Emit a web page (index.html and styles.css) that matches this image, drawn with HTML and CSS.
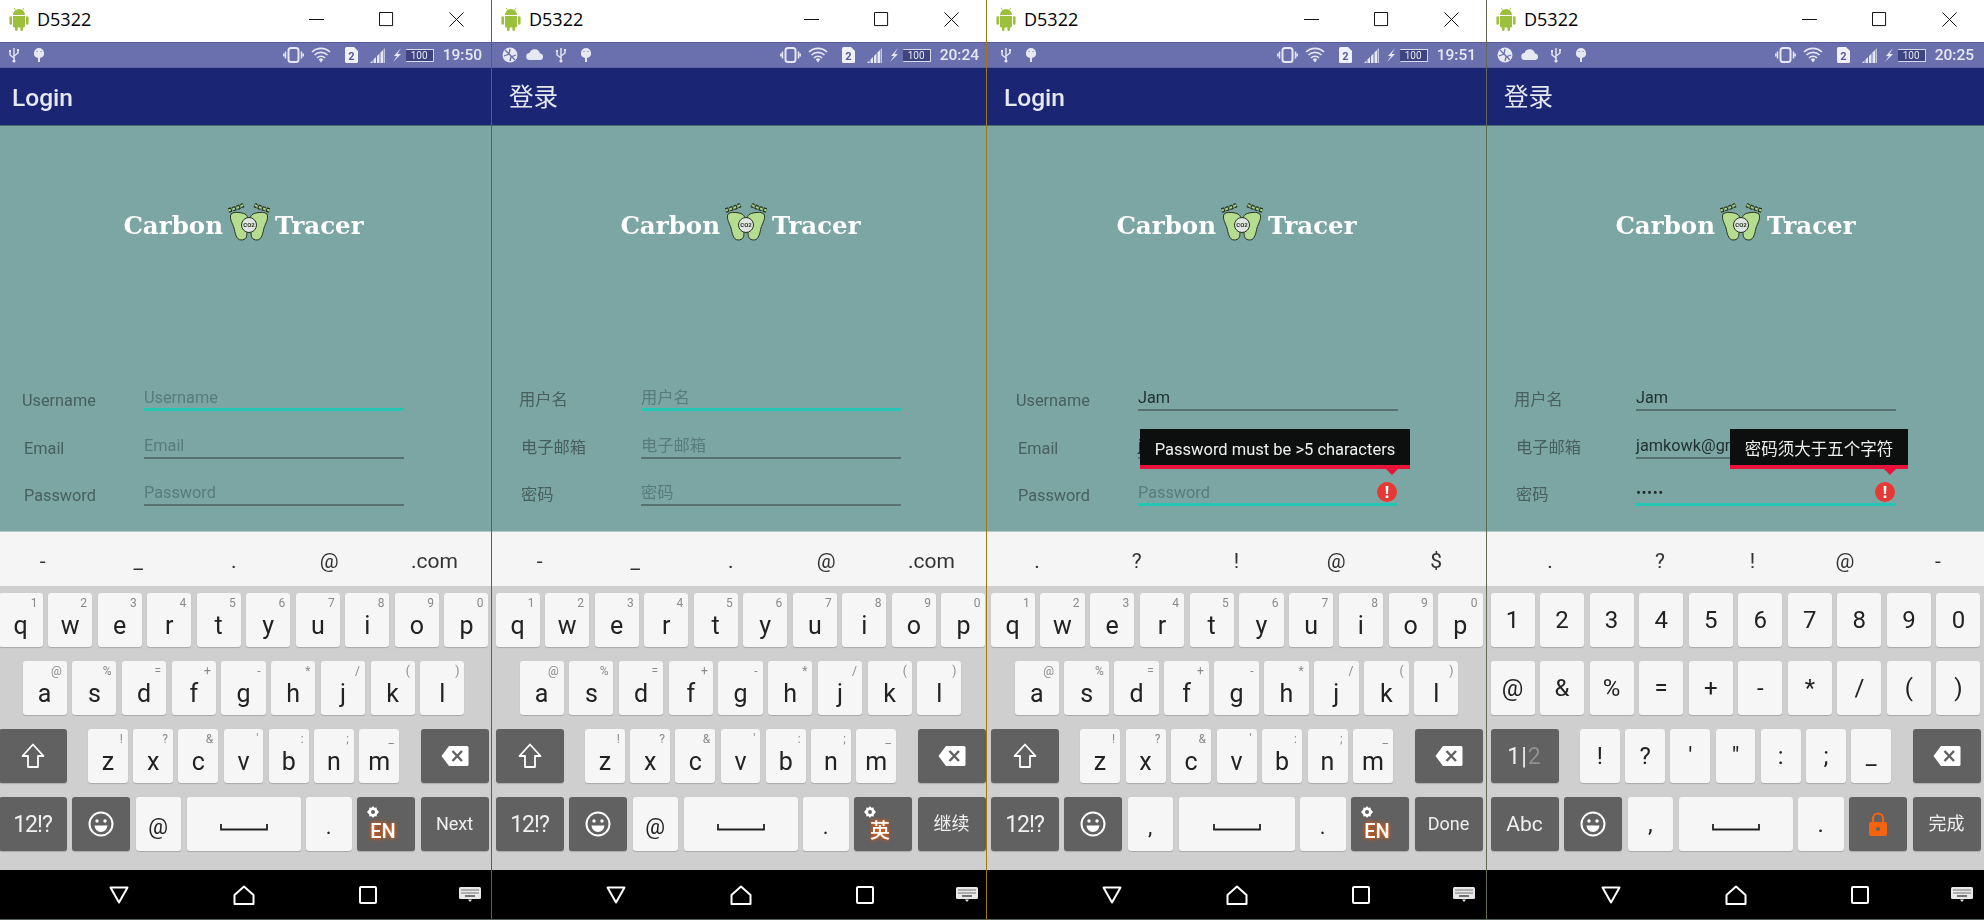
FILE: index.html
```html
<!DOCTYPE html>
<html lang="en">
<head>
<meta charset="UTF-8" />
<title>Carbon Tracer login</title>
<link rel="stylesheet" href="styles.css">
</head>
<body>

<svg class="defs" aria-hidden="true">
  <symbol id="i-android" viewBox="0 0 20 24">
    <path fill="#9bc13c" d="M4 8a6 6 0 0 1 12 0zM4 9h12v10a1.500 1.500 0 0 1-1.500 1.500H5.500A1.500 1.500 0 0 1 4 19zM.4 10.500a1.300 1.300 0 0 1 2.600 0v6a1.300 1.300 0 0 1-2.600 0zM17 10.500a1.300 1.300 0 0 1 2.600 0v6a1.300 1.300 0 0 1-2.600 0zM6 20h2.600v2.700a1.300 1.300 0 0 1-2.600 0zM11.400 20H14v2.700a1.300 1.300 0 0 1-2.600 0z"/>
    <path stroke="#9bc13c" stroke-width=".8" d="M6.500 3.500 5.200.8M13.500 3.500 14.800.8"/>
  </symbol>
  <symbol id="i-min" viewBox="0 0 16 16"><path stroke="#000" d="M0 8h16"/></symbol>
  <symbol id="i-max" viewBox="0 0 16 16"><path fill="none" stroke="#000" d="M.5.500h14v14H.5z"/></symbol>
  <symbol id="i-close" viewBox="0 0 16 16"><path stroke="#000" d="M.5.500l15 15M15.500.500l-15 15"/></symbol>
  <symbol id="i-saver" viewBox="0 0 16 16">
    <circle cx="8" cy="8" r="7.500" fill="#e6e8f2"/>
    <path fill="none" stroke="#6a70ae" stroke-width="1.300" d="M3 3l10 10M2 9l5-2 1-5M8 14l1-4 5-2"/>
  </symbol>
  <symbol id="i-cloud" viewBox="0 0 18 12"><path fill="#e6e8f2" d="M4 11a3.500 3.500 0 0 1-.5-7A5.500 5.500 0 0 1 14 4.500 3.300 3.300 0 0 1 14.500 11z"/></symbol>
  <symbol id="i-usb" viewBox="0 0 12 16">
    <path fill="none" stroke="#e6e8f2" stroke-width="1.400" d="M6 1v14M2 5v3l4 3M10 4v2l-4 3"/>
    <circle cx="6" cy="14" r="1.600" fill="#e6e8f2"/><rect x="1" y="3" width="2" height="2" fill="#e6e8f2"/><rect x="9" y="2" width="2" height="2" fill="#e6e8f2"/>
  </symbol>
  <symbol id="i-debug" viewBox="0 0 12 16">
    <path fill="#e6e8f2" d="M1 6a5 5 0 0 1 10 0v2a5 5 0 0 1-4 3v4H5v-4a5 5 0 0 1-4-3z"/>
    <path fill="#6a70ae" d="M3.500 4h1v1h-1zM7.500 4h1v1h-1z"/>
  </symbol>
  <symbol id="i-vibrate" viewBox="0 0 21 16">
    <rect x="5.500" y="1" width="10" height="14" rx="2.500" fill="none" stroke="#e6e8f2" stroke-width="2"/>
    <path fill="none" stroke="#e6e8f2" stroke-width="1.500" d="M2.500 4.500v7M18.500 4.500v7M.8 6.500v3M20.200 6.500v3"/>
  </symbol>
  <symbol id="i-wifi" viewBox="0 0 20 16">
    <path fill="none" stroke="#e6e8f2" stroke-width="1.700" d="M1 5a13 13 0 0 1 18 0M3.500 8a9.500 9.500 0 0 1 13 0M6 11a5.500 5.500 0 0 1 8 0"/>
    <path fill="#e6e8f2" d="M7.800 12.500a3 3 0 0 1 4.400 0L10 15.500z"/>
  </symbol>
  <symbol id="i-sim" viewBox="0 0 13 16">
    <path fill="#f1f2f8" d="M1.500 0H9l4 4v10.500a1.500 1.500 0 0 1-1.500 1.500h-10A1.500 1.500 0 0 1 0 14.500v-13A1.500 1.500 0 0 1 1.500 0z"/>
    <text x="6.500" y="13" text-anchor="middle" class="sim-num">2</text>
  </symbol>
  <symbol id="i-signal" viewBox="0 0 15 15">
    <path fill="#e6e8f2" d="M0 15l2.500-2.500V15zM3.500 15v-3.500L6 9v6zM7 15V8l2.500-2.500V15z"/><path fill="#e6e8f2" d="M10.500 15V4.500L13 2v13z"/>
    <path fill="#e6e8f2" opacity=".7" d="M13.500 15V1.500L15 0v15z"/>
  </symbol>
  <symbol id="i-bolt" viewBox="0 0 8 14"><path fill="#e6e8f2" d="M8 0 1 8h3l-4 6 8-8H4.500z"/></symbol>
  <symbol id="i-shift" viewBox="0 0 24 26"><path fill="none" stroke="#fff" stroke-width="1.800" stroke-linejoin="round" d="M12 1.500 1.500 13H7v11h10V13h5.500z"/></symbol>
  <symbol id="i-back" viewBox="0 0 28 22">
    <path fill="#fff" d="M8 1h18a1.500 1.500 0 0 1 1.500 1.500v17A1.500 1.500 0 0 1 26 21H8L.5 11z"/>
    <path stroke="#616161" stroke-width="2.400" d="M11.500 6l9.500 10M21 6l-9.500 10"/>
  </symbol>
  <symbol id="i-smile" viewBox="0 0 26 26">
    <circle cx="13" cy="13" r="11.500" fill="none" stroke="#fff" stroke-width="2"/>
    <circle cx="9" cy="10" r="1.700" fill="#fff"/><circle cx="17" cy="10" r="1.700" fill="#fff"/>
    <path fill="#fff" d="M6.500 14.500h13a6.500 6.500 0 0 1-13 0z"/>
  </symbol>
  <symbol id="i-space" viewBox="0 0 48 7"><path fill="none" stroke="#222" stroke-width="1.800" d="M1 0v5.500h46V0"/></symbol>
  <symbol id="i-gear" viewBox="0 0 12 12">
    <path fill="#fff" d="M6 0l1.300 1.800 2.300-.4.200 2.200L12 6l-2.200 2.400-.2 2.200-2.300-.4L6 12l-1.300-1.800-2.300.4-.2-2.200L0 6l2.200-2.400.2-2.200 2.300.4z"/>
    <circle cx="6" cy="6" r="2" fill="#616161"/>
  </symbol>
  <symbol id="i-lock" viewBox="0 0 18 24">
    <path fill="none" stroke="#f4640f" stroke-width="2.200" d="M4 11V6.500a5 5 0 0 1 10 0V11"/>
    <path fill="#f4640f" d="M2 10h14a2 2 0 0 1 2 2v10a2 2 0 0 1-2 2H2a2 2 0 0 1-2-2V12a2 2 0 0 1 2-2z"/>
    <circle cx="9" cy="17" r="2" fill="#616161"/>
  </symbol>
  <symbol id="i-nav-back" viewBox="0 0 20 18"><path fill="none" stroke="#fff" stroke-width="2" stroke-linejoin="round" d="M1.500 1.500h17L10 16.500z"/></symbol>
  <symbol id="i-nav-home" viewBox="0 0 22 20"><path fill="none" stroke="#fff" stroke-width="2" stroke-linejoin="round" d="M11 1.500 1.500 10v9h19v-9z"/></symbol>
  <symbol id="i-nav-recent" viewBox="0 0 18 18"><rect x="1" y="1" width="16" height="16" rx="1" fill="none" stroke="#fff" stroke-width="2"/></symbol>
  <symbol id="i-nav-kbd" viewBox="0 0 22 15">
    <rect x="0" y="0" width="22" height="12" rx="1.500" fill="#e8e8e8"/>
    <path stroke="#000" stroke-dasharray="1 1" d="M2.500 3h17M2.500 6h17"/><path stroke="#000" d="M6 9h10"/>
    <path fill="#e8e8e8" d="M9 12.500h4L11 15z"/>
  </symbol>
  <symbol id="i-logo" viewBox="0 0 44 38">
    <path fill="#b5dd8f" stroke="#26331f" stroke-width="1" d="M4 11c-2 5 2 10 3 14 1 4 2 12 7 12s6-3 6-8 1-9 1-12c0-3-1-6-6-7-4-1-9-1-11 1z"/>
    <path fill="#b5dd8f" stroke="#26331f" stroke-width="1" d="M40 11c2 5-2 10-3 14-1 4-2 12-7 12s-6-3-6-8-1-9-1-12c0-3 1-6 6-7 4-1 9-1 11 1z"/>
    <path fill="none" stroke="#26331f" stroke-width="4.500" stroke-dasharray="3.400 1" d="M1.500 7.500c5-1.500 10-3 15-5.500M42.500 7.500c-5-1.500-10-3-15-5.500"/>
    <path fill="none" stroke="#a9d584" stroke-width="2" stroke-dasharray="2.400 2" d="M1.500 7.500c5-1.500 10-3 15-5.500M42.500 7.500c-5-1.500-10-3-15-5.500"/>
    <circle cx="22" cy="22" r="7.500" fill="#dfe5e2" stroke="#26331f"/>
    <text x="22" y="24" text-anchor="middle" class="logo-co2">CO2</text>
  </symbol>
  <symbol id="i-error" viewBox="0 0 20 20">
    <circle cx="10" cy="10" r="10" fill="#e53935"/>
    <path fill="#fff" d="M8.600 4h2.800l-.4 8H9zM8.700 13.500h2.600V16H8.700z"/>
  </symbol>
</svg>

<main class="screens">

  <section class="window window-one">
    <header class="titlebar">
      <svg class="app-icon"><use href="#i-android"/></svg><span class="app-name">D5322</span>
      <div class="controls"><span class="ctrl"><svg><use href="#i-min"/></svg></span><span class="ctrl"><svg><use href="#i-max"/></svg></span><span class="ctrl"><svg><use href="#i-close"/></svg></span></div>
    </header>
    <div class="phone">
      <div class="status">
        <svg class="si si-usb"><use href="#i-usb"/></svg><svg class="si si-debug"><use href="#i-debug"/></svg>
        <div class="status-right">
          <svg class="si si-vibrate"><use href="#i-vibrate"/></svg><svg class="si si-wifi"><use href="#i-wifi"/></svg><svg class="si si-sim"><use href="#i-sim"/></svg><svg class="si si-signal"><use href="#i-signal"/></svg><svg class="si si-bolt"><use href="#i-bolt"/></svg><span class="battery">100</span><span class="clock">19:50</span>
        </div>
      </div>
      <div class="appbar">Login</div>
      <div class="content">
        <div class="logo"><span>Carbon</span><svg class="logo-feet"><use href="#i-logo"/></svg><span>Tracer</span></div>
        <form class="form">
          <div class="row row-first"><label>Username</label><div class="field is-focus"><span class="hint-text">Username</span></div></div>
          <div class="row"><label>Email</label><div class="field"><span class="hint-text">Email</span></div></div>
          <div class="row"><label>Password</label><div class="field"><span class="hint-text">Password</span></div></div>
        </form>
      </div>
      <div class="suggest suggest-com"><span>-</span><span>_</span><span>.</span><span>@</span><span>.com</span></div>
      <div class="keyboard">
        <div class="keyrow"><b class="key">q<i>1</i></b><b class="key">w<i>2</i></b><b class="key">e<i>3</i></b><b class="key">r<i>4</i></b><b class="key">t<i>5</i></b><b class="key">y<i>6</i></b><b class="key">u<i>7</i></b><b class="key">i<i>8</i></b><b class="key">o<i>9</i></b><b class="key">p<i>0</i></b></div>
        <div class="keyrow keyrow-nine"><b class="key">a<i>@</i></b><b class="key">s<i>%</i></b><b class="key">d<i>=</i></b><b class="key">f<i>+</i></b><b class="key">g<i>-</i></b><b class="key">h<i>*</i></b><b class="key">j<i>/</i></b><b class="key">k<i>(</i></b><b class="key">l<i>)</i></b></div>
        <div class="keyrow"><b class="key key-dark key-side"><svg class="k-shift"><use href="#i-shift"/></svg></b><div class="keymid"><b class="key">z<i>!</i></b><b class="key">x<i>?</i></b><b class="key">c<i>&amp;</i></b><b class="key">v<i>'</i></b><b class="key">b<i>:</i></b><b class="key">n<i>;</i></b><b class="key">m<i>_</i></b></div><b class="key key-dark key-side"><svg class="k-back"><use href="#i-back"/></svg></b></div>
        <div class="keyrow"><b class="key key-dark key-side k-sym">12!?</b><b class="key key-dark key-mid"><svg class="k-smile"><use href="#i-smile"/></svg></b><b class="key key-small k-low">@</b><b class="key key-space"><svg class="k-space"><use href="#i-space"/></svg></b><b class="key key-small k-low">.</b><b class="key key-dark key-mid k-lang"><svg class="k-gear"><use href="#i-gear"/></svg><em>EN</em></b><b class="key key-dark key-side k-act">Next</b></div>
      </div>
      <nav class="navbar"><svg class="nav-back"><use href="#i-nav-back"/></svg><svg class="nav-home"><use href="#i-nav-home"/></svg><svg class="nav-recent"><use href="#i-nav-recent"/></svg><svg class="nav-kbd"><use href="#i-nav-kbd"/></svg></nav>
    </div>
  </section>

  <section class="window window-two">
    <header class="titlebar">
      <svg class="app-icon"><use href="#i-android"/></svg><span class="app-name">D5322</span>
      <div class="controls"><span class="ctrl"><svg><use href="#i-min"/></svg></span><span class="ctrl"><svg><use href="#i-max"/></svg></span><span class="ctrl"><svg><use href="#i-close"/></svg></span></div>
    </header>
    <div class="phone">
      <div class="status">
        <svg class="si si-saver"><use href="#i-saver"/></svg><svg class="si si-cloud"><use href="#i-cloud"/></svg><svg class="si si-usb si-usb-next"><use href="#i-usb"/></svg><svg class="si si-debug"><use href="#i-debug"/></svg>
        <div class="status-right">
          <svg class="si si-vibrate"><use href="#i-vibrate"/></svg><svg class="si si-wifi"><use href="#i-wifi"/></svg><svg class="si si-sim"><use href="#i-sim"/></svg><svg class="si si-signal"><use href="#i-signal"/></svg><svg class="si si-bolt"><use href="#i-bolt"/></svg><span class="battery">100</span><span class="clock">20:24</span>
        </div>
      </div>
      <div class="appbar appbar-zh">登录</div>
      <div class="content">
        <div class="logo"><span>Carbon</span><svg class="logo-feet"><use href="#i-logo"/></svg><span>Tracer</span></div>
        <form class="form">
          <div class="row row-first"><label>用户名</label><div class="field is-focus"><span class="hint-text">用户名</span></div></div>
          <div class="row"><label>电子邮箱</label><div class="field"><span class="hint-text">电子邮箱</span></div></div>
          <div class="row"><label>密码</label><div class="field"><span class="hint-text">密码</span></div></div>
        </form>
      </div>
      <div class="suggest suggest-com"><span>-</span><span>_</span><span>.</span><span>@</span><span>.com</span></div>
      <div class="keyboard">
        <div class="keyrow"><b class="key">q<i>1</i></b><b class="key">w<i>2</i></b><b class="key">e<i>3</i></b><b class="key">r<i>4</i></b><b class="key">t<i>5</i></b><b class="key">y<i>6</i></b><b class="key">u<i>7</i></b><b class="key">i<i>8</i></b><b class="key">o<i>9</i></b><b class="key">p<i>0</i></b></div>
        <div class="keyrow keyrow-nine"><b class="key">a<i>@</i></b><b class="key">s<i>%</i></b><b class="key">d<i>=</i></b><b class="key">f<i>+</i></b><b class="key">g<i>-</i></b><b class="key">h<i>*</i></b><b class="key">j<i>/</i></b><b class="key">k<i>(</i></b><b class="key">l<i>)</i></b></div>
        <div class="keyrow"><b class="key key-dark key-side"><svg class="k-shift"><use href="#i-shift"/></svg></b><div class="keymid"><b class="key">z<i>!</i></b><b class="key">x<i>?</i></b><b class="key">c<i>&amp;</i></b><b class="key">v<i>'</i></b><b class="key">b<i>:</i></b><b class="key">n<i>;</i></b><b class="key">m<i>_</i></b></div><b class="key key-dark key-side"><svg class="k-back"><use href="#i-back"/></svg></b></div>
        <div class="keyrow"><b class="key key-dark key-side k-sym">12!?</b><b class="key key-dark key-mid"><svg class="k-smile"><use href="#i-smile"/></svg></b><b class="key key-small k-low">@</b><b class="key key-space"><svg class="k-space"><use href="#i-space"/></svg></b><b class="key key-small k-low">.</b><b class="key key-dark key-mid k-lang"><svg class="k-gear"><use href="#i-gear"/></svg><em>英</em></b><b class="key key-dark key-side k-act">继续</b></div>
      </div>
      <nav class="navbar"><svg class="nav-back"><use href="#i-nav-back"/></svg><svg class="nav-home"><use href="#i-nav-home"/></svg><svg class="nav-recent"><use href="#i-nav-recent"/></svg><svg class="nav-kbd"><use href="#i-nav-kbd"/></svg></nav>
    </div>
  </section>

  <section class="window window-three">
    <header class="titlebar">
      <svg class="app-icon"><use href="#i-android"/></svg><span class="app-name">D5322</span>
      <div class="controls"><span class="ctrl"><svg><use href="#i-min"/></svg></span><span class="ctrl"><svg><use href="#i-max"/></svg></span><span class="ctrl"><svg><use href="#i-close"/></svg></span></div>
    </header>
    <div class="phone">
      <div class="status">
        <svg class="si si-usb"><use href="#i-usb"/></svg><svg class="si si-debug"><use href="#i-debug"/></svg>
        <div class="status-right">
          <svg class="si si-vibrate"><use href="#i-vibrate"/></svg><svg class="si si-wifi"><use href="#i-wifi"/></svg><svg class="si si-sim"><use href="#i-sim"/></svg><svg class="si si-signal"><use href="#i-signal"/></svg><svg class="si si-bolt"><use href="#i-bolt"/></svg><span class="battery">100</span><span class="clock">19:51</span>
        </div>
      </div>
      <div class="appbar">Login</div>
      <div class="content">
        <div class="logo"><span>Carbon</span><svg class="logo-feet"><use href="#i-logo"/></svg><span>Tracer</span></div>
        <form class="form">
          <div class="row row-first"><label>Username</label><div class="field"><span class="value">Jam</span></div></div>
          <div class="row"><label>Email</label><div class="field"><span class="value">jamkowk@gmail.com</span></div></div>
          <div class="row"><label>Password</label><div class="field is-focus has-error"><span class="hint-text">Password</span>
            <svg class="err-icon"><use href="#i-error"/></svg>
            <div class="tip tip-en">Password must be &gt;5 characters</div>
          </div></div>
        </form>
      </div>
      <div class="suggest"><span>.</span><span>?</span><span>!</span><span>@</span><span>$</span></div>
      <div class="keyboard">
        <div class="keyrow"><b class="key">q<i>1</i></b><b class="key">w<i>2</i></b><b class="key">e<i>3</i></b><b class="key">r<i>4</i></b><b class="key">t<i>5</i></b><b class="key">y<i>6</i></b><b class="key">u<i>7</i></b><b class="key">i<i>8</i></b><b class="key">o<i>9</i></b><b class="key">p<i>0</i></b></div>
        <div class="keyrow keyrow-nine"><b class="key">a<i>@</i></b><b class="key">s<i>%</i></b><b class="key">d<i>=</i></b><b class="key">f<i>+</i></b><b class="key">g<i>-</i></b><b class="key">h<i>*</i></b><b class="key">j<i>/</i></b><b class="key">k<i>(</i></b><b class="key">l<i>)</i></b></div>
        <div class="keyrow"><b class="key key-dark key-side"><svg class="k-shift"><use href="#i-shift"/></svg></b><div class="keymid"><b class="key">z<i>!</i></b><b class="key">x<i>?</i></b><b class="key">c<i>&amp;</i></b><b class="key">v<i>'</i></b><b class="key">b<i>:</i></b><b class="key">n<i>;</i></b><b class="key">m<i>_</i></b></div><b class="key key-dark key-side"><svg class="k-back"><use href="#i-back"/></svg></b></div>
        <div class="keyrow"><b class="key key-dark key-side k-sym">12!?</b><b class="key key-dark key-mid"><svg class="k-smile"><use href="#i-smile"/></svg></b><b class="key key-small k-low">,</b><b class="key key-space"><svg class="k-space"><use href="#i-space"/></svg></b><b class="key key-small k-low">.</b><b class="key key-dark key-mid k-lang"><svg class="k-gear"><use href="#i-gear"/></svg><em>EN</em></b><b class="key key-dark key-side k-act">Done</b></div>
      </div>
      <nav class="navbar"><svg class="nav-back"><use href="#i-nav-back"/></svg><svg class="nav-home"><use href="#i-nav-home"/></svg><svg class="nav-recent"><use href="#i-nav-recent"/></svg><svg class="nav-kbd"><use href="#i-nav-kbd"/></svg></nav>
    </div>
  </section>

  <section class="window window-four">
    <header class="titlebar">
      <svg class="app-icon"><use href="#i-android"/></svg><span class="app-name">D5322</span>
      <div class="controls"><span class="ctrl"><svg><use href="#i-min"/></svg></span><span class="ctrl"><svg><use href="#i-max"/></svg></span><span class="ctrl"><svg><use href="#i-close"/></svg></span></div>
    </header>
    <div class="phone">
      <div class="status">
        <svg class="si si-saver"><use href="#i-saver"/></svg><svg class="si si-cloud"><use href="#i-cloud"/></svg><svg class="si si-usb si-usb-next"><use href="#i-usb"/></svg><svg class="si si-debug"><use href="#i-debug"/></svg>
        <div class="status-right">
          <svg class="si si-vibrate"><use href="#i-vibrate"/></svg><svg class="si si-wifi"><use href="#i-wifi"/></svg><svg class="si si-sim"><use href="#i-sim"/></svg><svg class="si si-signal"><use href="#i-signal"/></svg><svg class="si si-bolt"><use href="#i-bolt"/></svg><span class="battery">100</span><span class="clock">20:25</span>
        </div>
      </div>
      <div class="appbar appbar-zh">登录</div>
      <div class="content">
        <div class="logo"><span>Carbon</span><svg class="logo-feet"><use href="#i-logo"/></svg><span>Tracer</span></div>
        <form class="form">
          <div class="row row-first"><label>用户名</label><div class="field"><span class="value">Jam</span></div></div>
          <div class="row"><label>电子邮箱</label><div class="field"><span class="value">jamkowk@gmail.com</span></div></div>
          <div class="row"><label>密码</label><div class="field is-focus has-error"><span class="value value-dots">•••••</span>
            <svg class="err-icon"><use href="#i-error"/></svg>
            <div class="tip tip-zh">密码须大于五个字符</div>
          </div></div>
        </form>
      </div>
      <div class="suggest suggest-sym"><span>.</span><span>?</span><span>!</span><span>@</span><span>-</span></div>
      <div class="keyboard keyboard-sym">
        <div class="keyrow"><b class="key">1</b><b class="key">2</b><b class="key">3</b><b class="key">4</b><b class="key">5</b><b class="key">6</b><b class="key">7</b><b class="key">8</b><b class="key">9</b><b class="key">0</b></div>
        <div class="keyrow"><b class="key">@</b><b class="key">&amp;</b><b class="key">%</b><b class="key">=</b><b class="key">+</b><b class="key">-</b><b class="key">*</b><b class="key">/</b><b class="key">(</b><b class="key">)</b></div>
        <div class="keyrow"><b class="key key-dark key-side k-sym k-page">1|<u>2</u></b><div class="keymid"><b class="key">!</b><b class="key">?</b><b class="key">'</b><b class="key">"</b><b class="key">:</b><b class="key">;</b><b class="key">_</b></div><b class="key key-dark key-side"><svg class="k-back"><use href="#i-back"/></svg></b></div>
        <div class="keyrow"><b class="key key-dark key-side k-act k-abc">Abc</b><b class="key key-dark key-mid"><svg class="k-smile"><use href="#i-smile"/></svg></b><b class="key key-small k-low">,</b><b class="key key-space"><svg class="k-space"><use href="#i-space"/></svg></b><b class="key key-small k-low">.</b><b class="key key-dark key-mid"><svg class="k-lock"><use href="#i-lock"/></svg></b><b class="key key-dark key-side k-act">完成</b></div>
      </div>
      <nav class="navbar"><svg class="nav-back"><use href="#i-nav-back"/></svg><svg class="nav-home"><use href="#i-nav-home"/></svg><svg class="nav-recent"><use href="#i-nav-recent"/></svg><svg class="nav-kbd"><use href="#i-nav-kbd"/></svg></nav>
    </div>
  </section>

</main>

</body>
</html>
```

FILE: styles.css
```css
* { box-sizing: border-box; }
html, body { margin: 0; padding: 0; height: 100%; overflow: hidden; background: #fff; }
body { font-family: Roboto, "Noto Sans CJK SC", sans-serif; }
.defs { display: none; }
svg { display: block; }

.screens { display: grid; grid-template-columns: 492px 495px 500px 497px; height: 920px; }
.window { display: flex; flex-direction: column; overflow: hidden; border-right: 1px solid #5f5f50; border-bottom: 1px solid #55605a; }
.window-two { border-right-color: #a07810; }
.window-three { border-right-color: #5f6a50; }
.window-four { border-right: 0; }

/* windows title bar */
.titlebar { display: flex; align-items: center; height: 42px; flex: none; padding-left: 9px; background: #fff; }
.app-icon { width: 20px; height: 24px; margin-top: -4px; }
.app-name { margin-left: 8px; margin-top: -4px; font: 18px "Open Sans", sans-serif; color: #000; }
.controls { display: flex; margin-left: auto; margin-top: -4px; }
.ctrl { display: flex; justify-content: center; width: 70px; }
.ctrl svg { width: 15px; height: 15px; }

/* phone */
.phone { display: flex; flex-direction: column; flex: 1; width: 497px; filter: blur(.35px); }
.window-one .phone { margin-left: -5px; }
.window-three .phone { width: 499px; }

.status { display: flex; align-items: center; height: 26px; flex: none; padding: 0 10px; background: #6a70ae; border-top: 1px solid #555b98; border-bottom: 1px solid #5b62a3; }
.si { flex: none; }
.si-usb { width: 12px; height: 16px; margin-left: 3px; }
.si-debug { width: 12px; height: 16px; margin-left: 13px; }
.si-saver { width: 16px; height: 16px; }
.si-cloud { width: 18px; height: 12px; margin-left: 8px; }
.si-usb-next { margin-left: 11px; }
.status-right { display: flex; align-items: center; margin-left: auto; }
.si-vibrate { width: 21px; height: 16px; }
.si-wifi { width: 20px; height: 16px; margin-left: 7px; }
.si-sim { width: 13px; height: 16px; margin-left: 14px; }
.sim-num { font: bold 11px Roboto, sans-serif; fill: #555b98; }
.si-signal { width: 15px; height: 15px; margin-left: 12px; }
.si-bolt { width: 8px; height: 14px; margin-left: 8px; }
.battery { width: 28px; height: 13px; margin-left: 5px; background: #3d4480; border: 1px solid #d8daea; border-left: 0; border-radius: 1px; font-size: 10px; line-height: 11px; text-align: center; color: #e6e8f2; }
.clock { margin-left: 9px; font-size: 15.500px; font-weight: 500; color: #e6e8f2; }

.appbar { display: flex; align-items: center; height: 58px; flex: none; padding: 1px 0 0 17px; background: #1a2674; border-bottom: 1px solid #4a6a72; font-size: 24.500px; font-weight: 500; color: #e6e8f2; }
.appbar-zh { padding-top: 0; padding-bottom: 3px; font-weight: 400; }

.content { display: flex; flex-direction: column; height: 405px; flex: none; background: #7ca6a3; }
.logo { display: flex; justify-content: center; align-items: center; gap: 4px; margin-top: 76px; height: 40px; font: bold 24.500px "DejaVu Serif", serif; color: #fff; }
.logo span { margin-top: 6px; }
.logo-feet { width: 44px; height: 38px; }
.logo-co2 { font: bold 6px Roboto, sans-serif; fill: #26331f; }

.form { margin-top: auto; padding-bottom: 25px; }
.window-three .form { padding-left: 2px; }
.row { display: grid; grid-template-columns: 149px 260px; height: 47.500px; }
.row label { align-self: end; padding-left: 29px; margin-bottom: 1px; font-size: 16.300px; color: #47605f; }
.row-first label { padding-left: 27px; }
.field { position: relative; display: flex; align-items: flex-end; padding-bottom: 1px; border-bottom: 2px solid #587272; font-size: 16.300px; line-height: 20px; }
.field.is-focus { border-bottom: 3px solid #26c6b4; padding-bottom: 0; }
.hint-text { color: #587c7c; }
.value { color: #1f2f2f; }
.value-dots { font-size: 15px; letter-spacing: .5px; }
.err-icon { position: absolute; right: 1px; bottom: 1px; width: 20px; height: 20px; }
.tip { position: absolute; right: -12px; bottom: 34px; height: 40px; padding-top: 10px; background: #0c0f0e; border-bottom: 4px solid #e8133a; font-size: 16.500px; line-height: 22px; color: #eef0f0; text-align: center; white-space: nowrap; }
.tip::after { content: ""; position: absolute; right: 12px; bottom: -10px; border: 6px solid transparent; border-bottom: 0; border-top-color: #e8133a; }
.tip-en { width: 270px; }
.tip-zh { width: 178px; }

.suggest { display: grid; grid-template-columns: repeat(5, 1fr); align-items: center; height: 55px; flex: none; padding-top: 4px; background: #f5f5f5; border-top: 1px solid #b5cac8; font-size: 21px; color: #333; text-align: center; }
.suggest-com { grid-template-columns: repeat(4, 95.400fr) 115fr; }
.suggest-sym { grid-template-columns: 126px 94px 91px 94px 1fr; }

.keyboard { display: flex; flex-direction: column; gap: 14px; height: 284px; flex: none; padding: 7px 3.500px 0; background: #cfcfcf; }
.keyrow { display: flex; gap: 5.500px; height: 54px; }
.keyrow-nine { padding: 0 24px; }
.key { position: relative; display: flex; flex: 1; align-items: center; justify-content: center; padding-top: 11px; background: #f6f6f6; border-radius: 3px; box-shadow: 0 1px 1px #a9a9a9; font-size: 25px; font-weight: 400; line-height: 1; color: #222; }
.key i { position: absolute; top: 3px; right: 5px; font-size: 12px; font-style: normal; line-height: 14px; color: #8a8a8a; }
.keymid { display: flex; flex: 1; gap: 5.500px; margin: 0 16px; }
.key-dark { background: #616161; padding-top: 0; color: #f0f0f0; }
.key-side { flex: none; width: 68px; }
.key-mid { flex: none; width: 58px; }
.key-small { flex: none; width: 45.500px; }
.key-space { padding-top: 0; }
.k-low { padding-top: 5px; font-size: 22px; }
.k-sym { font-size: 23px; letter-spacing: -1px; }
.k-act { font-size: 18px; }
.k-abc { font-size: 21px; }
.k-page { letter-spacing: 1px; }
.k-page u { text-decoration: none; color: #8f8f8f; }
.k-shift { width: 24px; height: 26px; }
.k-back { width: 28px; height: 22px; }
.k-smile { width: 26px; height: 26px; }
.k-space { width: 48px; height: 7px; margin-top: 7px; }
.k-lang em { margin: 14px 0 0 -6px; font-size: 20px; font-style: normal; font-weight: 500; color: #fff; text-shadow: 0 0 5px #e8590c, 0 0 3px #e8590c; }
.k-gear { position: absolute; top: 9px; left: 10px; width: 12px; height: 12px; }
.k-lock { width: 18px; height: 24px; }
.keyboard-sym .key:not(.key-dark) { padding-top: 0; font-size: 24px; }
.keyboard-sym .k-low { padding-top: 5px; font-size: 22px; }

.navbar { display: grid; grid-template-columns: 1fr 2fr 2fr 2fr 1fr; align-items: center; justify-items: center; flex: 1; background: #000; }
.nav-back { grid-column: 2; width: 20px; height: 18px; }
.nav-home { width: 22px; height: 20px; }
.nav-recent { width: 18px; height: 18px; }
.nav-kbd { width: 22px; height: 15px; justify-self: end; margin-right: 11px; }
```
